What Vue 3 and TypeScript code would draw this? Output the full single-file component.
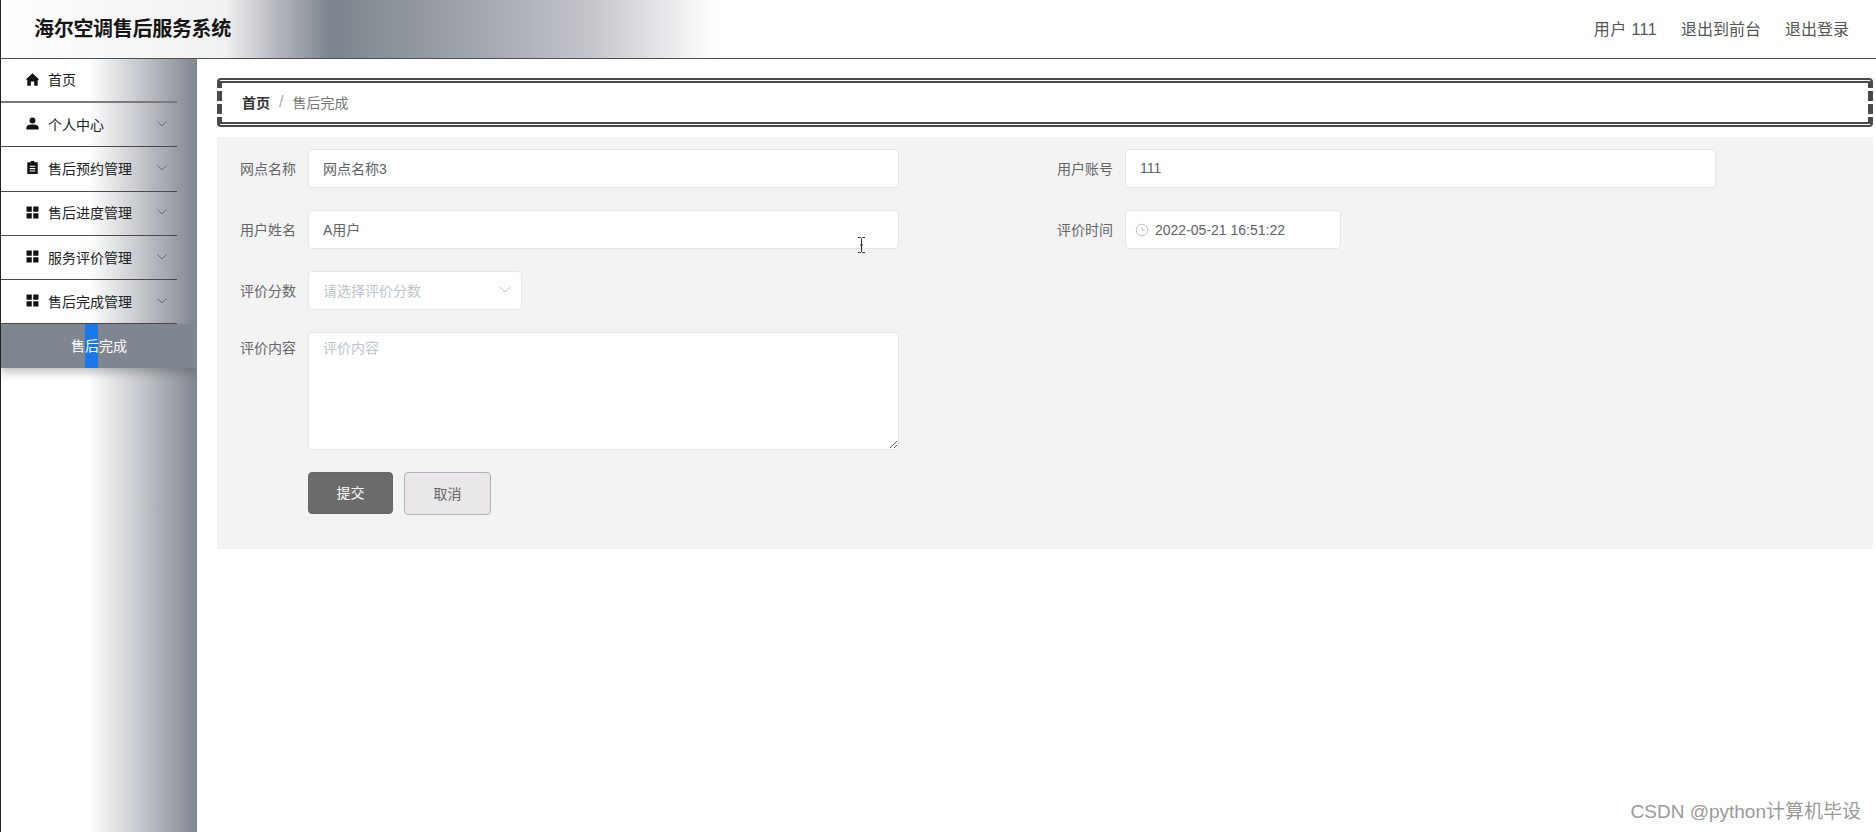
<script setup lang="ts">
type MenuItem = { label: string; icon: 'home' | 'user' | 'order' | 'grid'; arrow: boolean }

const menus: MenuItem[] = [
  { label: '首页', icon: 'home', arrow: false },
  { label: '个人中心', icon: 'user', arrow: true },
  { label: '售后预约管理', icon: 'order', arrow: true },
  { label: '售后进度管理', icon: 'grid', arrow: true },
  { label: '服务评价管理', icon: 'grid', arrow: true },
  { label: '售后完成管理', icon: 'grid', arrow: true }
]
</script>

<template>
  <div class="page">
    <header class="topbar">
      <h1 class="title">海尔空调售后服务系统</h1>
      <nav class="top-links">
        <span class="user">用户 111</span>
        <span>退出到前台</span>
        <span>退出登录</span>
      </nav>
    </header>

    <div class="body">
      <aside class="sidebar">
        <ul class="menu">
          <li v-for="m in menus" :key="m.label" class="menu-item">
            <svg class="menu-icon" viewBox="0 0 14 14" fill="#111">
              <path v-if="m.icon === 'home'" d="M7 .4 14 6.6 13.1 7.6 12.6 7.2V13.6H8.8V9.2H5.2V13.6H1.4V7.2L.9 7.6 0 6.6Z" />
              <path v-else-if="m.icon === 'user'" d="M7 .6a3.2 3.2 0 1 1 0 6.4 3.2 3.2 0 0 1 0-6.4ZM.4 13.4v-1.8C.4 9.4 2.6 8.2 7 8.2s6.6 1.2 6.6 3.4v1.8Z" />
              <path
                v-else-if="m.icon === 'order'"
                fill-rule="evenodd"
                d="M5 0H9V1.4H12.6V14H1.4V1.4H5ZM4 5V6.2H10V5ZM4 7.6V8.8H10V7.6ZM4 10.2V11.4H10V10.2Z"
              />
              <path v-else d="M.6.6H6.2V6.2H.6ZM7.8.6H13.4V6.2H7.8ZM.6 7.8H6.2V13.4H.6ZM7.8 7.8H13.4V13.4H7.8Z" />
            </svg>
            <span class="menu-label">{{ m.label }}</span>
            <svg v-if="m.arrow" class="chevron" viewBox="0 0 10 6" fill="none" stroke="#666b72" stroke-width="1">
              <path d="M.6.6 5 5 9.4.6" />
            </svg>
          </li>
        </ul>
        <div class="sub-active">
          <i class="sub-mark"></i>
          <span class="sub-label">售后完成</span>
        </div>
      </aside>

      <main class="main">
        <div class="crumbs">
          <b>首页</b>
          <em>/</em>
          <span>售后完成</span>
        </div>

        <form class="panel" @submit.prevent>
          <div class="field">
            <label>网点名称</label>
            <input class="ctl" value="网点名称3" readonly />
          </div>
          <div class="field">
            <label>用户账号</label>
            <input class="ctl" value="111" readonly />
          </div>
          <div class="field">
            <label>用户姓名</label>
            <input class="ctl" value="A用户" readonly />
          </div>
          <div class="field">
            <label>评价时间</label>
            <div class="ctl date">
              <svg viewBox="0 0 14 14" fill="none" stroke="#c0c4cc" stroke-width="1">
                <circle cx="7" cy="7" r="5.8" />
                <path d="M7 3.6V7.3H9.8" />
              </svg>
              <span>2022-05-21 16:51:22</span>
            </div>
          </div>
          <div class="field wide">
            <label>评价分数</label>
            <div class="ctl select">
              <span>请选择评价分数</span>
              <svg viewBox="0 0 12 7" fill="none" stroke="#c0c4cc" stroke-width="1">
                <path d="M.7.7 6 6 11.3.7" />
              </svg>
            </div>
          </div>
          <div class="field wide top">
            <label>评价内容</label>
            <textarea class="ctl area" placeholder="评价内容"></textarea>
          </div>
          <div class="actions wide">
            <button class="btn primary" type="button">提交</button>
            <button class="btn" type="button">取消</button>
          </div>
        </form>
      </main>
    </div>

    <svg class="ibeam" viewBox="0 0 9 16" fill="none" stroke="#333" stroke-width="1">
      <path d="M1 .5H3.5L4.5 1.5 5.5 .5H8M4.5 1.5V14.5M1 15.5H3.5L4.5 14.5 5.5 15.5H8M3 8H6" />
    </svg>
    <div class="watermark">CSDN @python计算机毕设</div>
  </div>
</template>

<style scoped>
.page {
  position: relative;
  height: 832px;
  overflow: hidden;
  box-sizing: border-box;
  border-left: 1px solid #222;
  display: flex;
  flex-direction: column;
  font-family: "Liberation Sans", "Noto Sans CJK SC", sans-serif;
  font-size: 14px;
  color: #606266;
  background: #fff;
}

.topbar {
  flex: none;
  height: 59px;
  box-sizing: border-box;
  border-bottom: 1px solid #4a4d52;
  padding: 0 27px 3px 33px;
  display: flex;
  align-items: center;
  justify-content: space-between;
  background: linear-gradient(90deg, #fff 0, #f1f0f2 225px, #b4b8be 275px, #7d848d 330px, #a3a7ae 480px, #c4c6cc 590px, #fff 715px);
}
.title {
  margin: 0;
  font-size: 20px;
  font-weight: 700;
  letter-spacing: -0.3px;
  color: #161616;
}
.top-links {
  display: flex;
  gap: 24px;
  font-size: 16px;
  color: #555;
}
.user {
  letter-spacing: 0.4px;
}

.body {
  flex: 1;
  display: flex;
  min-height: 0;
}

.sidebar {
  flex: none;
  width: 196px;
  overflow: hidden;
  background: linear-gradient(90deg, #fff 0, #fff 88px, #c9ccd0 135px, #808690 196px);
}
.menu {
  margin: 0;
  padding: 0;
  list-style: none;
  width: 176px;
}
.menu-item {
  height: 44.3px;
  box-sizing: border-box;
  border-bottom: 1px solid #4a4a4e;
  display: flex;
  align-items: center;
  padding: 0 10px 2px 25px;
  color: #222;
}
.menu-item:first-child {
  height: 44px;
  border-bottom: 2px solid #7a7a7a;
}
.menu-icon {
  width: 13px;
  height: 13px;
  flex: none;
}
.menu-label {
  margin-left: 9px;
  flex: 1;
}
.chevron {
  width: 10px;
  height: 6px;
  flex: none;
}
.sub-active {
  position: relative;
  height: 44px;
  padding-bottom: 2px;
  box-sizing: border-box;
  background: #808690;
  box-shadow: 0 5px 8px rgba(60, 60, 60, 0.3);
  display: flex;
  align-items: center;
  justify-content: center;
  color: #fff;
}
.sub-mark {
  position: absolute;
  left: 84px;
  top: 0;
  width: 13px;
  height: 100%;
  background: #1a78ea;
}
.sub-label {
  position: relative;
}

.main {
  flex: 1;
  min-width: 0;
  padding: 19px 3px 0 20px;
}
.crumbs {
  height: 49px;
  box-sizing: border-box;
  border-width: 5px;
  border-style: double dashed;
  border-color: #4a4a4a;
  border-radius: 4px;
  display: flex;
  align-items: center;
  padding: 0 0 2px 20px;
  color: #777;
}
.crumbs b {
  color: #333;
}
.crumbs em {
  font-style: normal;
  font-size: 16px;
  color: #a8acb4;
  margin: 0 9px;
}

.panel {
  margin-top: 10px;
  height: 412px;
  box-sizing: border-box;
  padding: 12px 0 0 11px;
  background: #f3f3f4;
  display: grid;
  grid-template-columns: 817px 1fr;
  grid-auto-rows: min-content;
  row-gap: 22px;
}
.field {
  display: flex;
  align-items: center;
}
.field.top {
  align-items: flex-start;
}
.field.top label {
  line-height: 32px;
}
.wide {
  grid-column: 1 / -1;
}
.field label {
  width: 68px;
  margin-right: 12px;
  padding-bottom: 2px;
  text-align: right;
  color: #666;
}
.ctl {
  width: 591px;
  height: 39px;
  box-sizing: border-box;
  border: 1px solid #e4e5ec;
  border-radius: 4px;
  background: #fff;
  padding: 0 15px 2px 14px;
  font: inherit;
  color: #606266;
  outline: none;
}
.date {
  width: 216px;
  padding: 0 10px 0 9px;
  display: flex;
  align-items: center;
  gap: 6px;
}
.date svg {
  width: 14px;
  height: 14px;
  flex: none;
}
.select {
  width: 214px;
  padding-right: 10px;
  display: flex;
  align-items: center;
  justify-content: space-between;
  color: #c0c4cc;
}
.select svg {
  width: 12px;
  height: 7px;
}
.area {
  height: 118px;
  padding: 5px 15px 5px 14px;
  line-height: 20px;
  resize: vertical;
  display: block;
}
.area::placeholder {
  color: #c0c4cc;
}

.actions {
  display: flex;
  gap: 11px;
  padding-left: 80px;
}
.btn {
  width: 87px;
  height: 43px;
  box-sizing: border-box;
  border: 1px solid #b4b4b6;
  border-radius: 4px;
  background: #e9e7ea;
  color: #666;
  font: inherit;
  padding: 0 0 2px;
}
.btn.primary {
  width: 85px;
  height: 42px;
  border-color: #666;
  background: #6b6b6b;
  color: #fff;
}

.ibeam {
  position: absolute;
  left: 856px;
  top: 237px;
  width: 9px;
  height: 16px;
}
.watermark {
  position: absolute;
  right: 15px;
  bottom: 9px;
  font-size: 19px;
  color: #9a9a9a;
}
</style>
